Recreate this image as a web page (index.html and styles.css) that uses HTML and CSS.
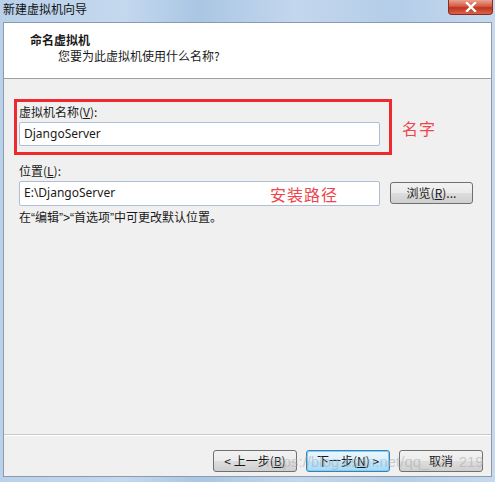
FILE: index.html
```html
<!DOCTYPE html>
<html>
<head>
<meta charset="utf-8">
<link rel="stylesheet" href="styles.css">
</head>
<body>
<div class="window">
  <div class="titlebar">
    <span class="title">新建虚拟机向导</span>
    <div class="close"><svg width="14" height="10" viewBox="0 0 14 10"><path d="M3 1 L11 9 M11 1 L3 9" stroke="#fff" stroke-width="2.4" stroke-linecap="square"/></svg></div>
  </div>
  <div class="frame">
    <div class="header">
      <div class="h-title">命名虚拟机</div>
      <div class="h-sub">您要为此虚拟机使用什么名称?</div>
    </div>
    <div class="body">
      <div class="name-row">
        <div class="redbox">
          <div class="label">虚拟机名称(<u>V</u>):</div>
          <div class="input">DjangoServer</div>
        </div>
        <div class="note note-name">名字</div>
      </div>
      <div class="label loc-label">位置(<u>L</u>):</div>
      <div class="loc-row">
        <div class="input loc-input">E:\DjangoServer<span class="note note-path">安装路径</span></div>
        <div class="btn browse">浏览(<u>R</u>)...</div>
      </div>
      <div class="hint">在<span class="q">“</span>编辑<span class="q">”&gt;“</span>首选项<span class="q">”</span>中可更改默认位置。</div>
    </div>
    <div class="footer">
      <div class="btn">&lt; 上一步(<u>B</u>)</div>
      <div class="btn focus">下一步(<u>N</u>) &gt;</div>
      <div class="btn">取消</div>
      <div class="watermark">https://blog.csdn.net/qq_42&nbsp;&nbsp;&nbsp;219</div>
    </div>
  </div>
</div>
</body>
</html>
```
FILE: styles.css
```css
html, body {
  margin: 0;
  padding: 0;
}
body {
  width: 495px;
  height: 482px;
  overflow: hidden;
  font-family: "Noto Sans CJK SC", "Liberation Sans", sans-serif;
  font-size: 12px;
  color: #1a1a1a;
}
.window {
  width: 495px;
  height: 482px;
  box-sizing: border-box;
  background: linear-gradient(90deg, #b9d1ea 0%, #c4d8ee 25%, #aac6e4 40%, #c3d7ed 60%, #b4cde8 80%, #c6d9ee 100%);
  padding: 0 3px 5px 3px;
  display: flex;
  flex-direction: column;
}
.titlebar {
  height: 22px;
  position: relative;
  display: flex;
  align-items: flex-start;
}
.title {
  font-size: 12px;
  line-height: 18px;
  color: #111;
}
.close {
  position: absolute;
  right: -1px;
  top: 0;
  width: 45px;
  height: 15px;
  border: 1px solid #8a2a20;
  border-top: none;
  border-radius: 0 0 4px 4px;
  background: linear-gradient(#e8a390 0%, #d45a45 45%, #c0321c 55%, #d8654c 100%);
  display: flex;
  align-items: center;
  justify-content: center;
  box-sizing: border-box;
}
.frame {
  flex: 1;
  background: #f0f0f0;
  border: 1px solid #8b9bab;
  display: flex;
  flex-direction: column;
}
.header {
  background: #fff;
  height: 56px;
  border-bottom: 1px solid #a0a0a0;
  box-sizing: border-box;
  padding-top: 9px;
}
.h-title {
  font-weight: bold;
  margin-left: 26px;
  line-height: 16px;
}
.h-sub {
  margin-left: 54px;
  line-height: 16px;
}
.body {
  flex: 1;
  padding: 20px 0 0 10px;
}
.name-row {
  display: flex;
  align-items: center;
}
.redbox {
  width: 378px;
  height: 56px;
  border: 3px solid #ee2a2e;
  box-sizing: border-box;
  padding: 2px 0 0 2px;
}
.label {
  line-height: 16px;
  height: 17px;
}
.input {
  width: 361px;
  height: 24px;
  box-sizing: border-box;
  border: 1px solid #abc0d6;
  border-radius: 2px;
  background: #fff;
  padding-left: 4px;
  line-height: 22px;
  font-family: "Noto Sans", "Liberation Sans", sans-serif;
  font-size: 12px;
  margin-top: 1px;
}
.note {
  color: #f0454a;
  font-size: 16px;
  font-family: "Noto Sans CJK SC", sans-serif;
}
.note-name {
  margin-left: 10px;
  margin-top: 2px;
  letter-spacing: 1px;
}
.loc-label {
  margin: 8px 0 0 5px;
}
.loc-row {
  display: flex;
  align-items: center;
  margin-left: 5px;
}
.loc-input {
  margin-top: 1px;
  height: 25px;
  position: relative;
}
.note-path {
  position: absolute;
  left: 250px;
  top: 1px;
  line-height: 22px;
  letter-spacing: 1px;
}
.btn {
  width: 84px;
  height: 22px;
  flex-shrink: 0;
  box-sizing: border-box;
  border: 1px solid #707070;
  border-radius: 3px;
  background: linear-gradient(#f2f2f2 0%, #ebebeb 50%, #dddddd 51%, #cfcfcf 100%);
  text-align: center;
  line-height: 20px;
  font-size: 12px;
}
.browse {
  margin-left: 10px;
  width: 83px;
}
.hint {
  margin: 3px 0 0 5px;
  line-height: 16px;
}
.q {
  font-family: "Liberation Sans", sans-serif;
}
.footer {
  height: 42px;
  border-top: 1px solid #c9c9c9;
  box-shadow: inset 0 1px 0 #fff;
  display: flex;
  justify-content: flex-end;
  align-items: flex-end;
  gap: 9px;
  padding-right: 8px;
  padding-bottom: 4px;
  box-sizing: border-box;
  position: relative;
}
.btn.focus {
  border-color: #3c7fb1;
  box-shadow: inset 0 0 0 1px #7fd0f5;
  background: linear-gradient(#eaf6fd 0%, #d9f0fc 50%, #bee6fd 51%, #a7d9f5 100%);
}
.watermark {
  position: absolute;
  left: 262px;
  bottom: 6px;
  font-family: "Liberation Sans", sans-serif;
  font-size: 15px;
  color: rgba(170, 170, 170, 0.55);
  pointer-events: none;
  white-space: nowrap;
}
```
